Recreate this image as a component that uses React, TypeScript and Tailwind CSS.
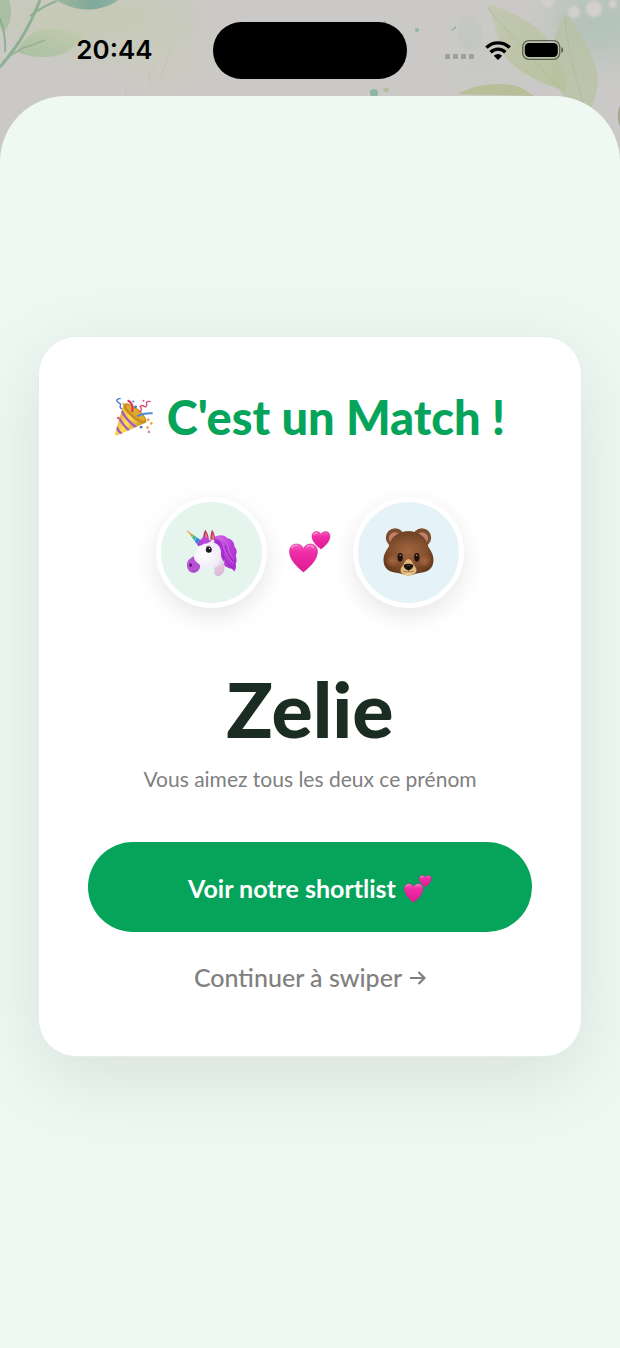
type IconProps = { className?: string };

function Wallpaper() {
  return (
    <svg
      viewBox="0 0 620 190"
      preserveAspectRatio="xMidYMin slice"
      className="absolute inset-x-0 top-0 h-[190px] w-full"
      aria-hidden="true"
    >
      <defs>
        <filter id="wash" x="-50%" y="-50%" width="200%" height="200%">
          <feGaussianBlur stdDeviation="18" />
        </filter>
        <filter id="soft" x="-20%" y="-20%" width="140%" height="140%">
          <feGaussianBlur stdDeviation="1.2" />
        </filter>
        <linearGradient id="leafTeal" x1="0" y1="0" x2="1" y2="0">
          <stop offset="0" stopColor="#9fb89e" />
          <stop offset="0.6" stopColor="#7fa898" />
          <stop offset="1" stopColor="#8db3a4" />
        </linearGradient>
        <linearGradient id="leafSoft" x1="0" y1="1" x2="1" y2="0">
          <stop offset="0" stopColor="#a9c0a2" />
          <stop offset="1" stopColor="#c4cbad" />
        </linearGradient>
        <linearGradient id="leafLime" x1="0" y1="0" x2="1" y2="1">
          <stop offset="0" stopColor="#c3c7b2" />
          <stop offset="1" stopColor="#b8c29e" />
        </linearGradient>
      </defs>
      <rect width="620" height="190" fill="#cbc9c7" />
      <g filter="url(#wash)">
        <ellipse cx="100" cy="20" rx="100" ry="34" fill="#c6c9b6" />
        <ellipse cx="160" cy="60" rx="45" ry="30" fill="#cacabf" />
        <ellipse cx="600" cy="22" rx="50" ry="38" fill="#b3c3b9" />
        <ellipse cx="480" cy="60" rx="40" ry="34" fill="#c8c9c4" />
      </g>

      <path d="M0 0h9c4 11 2 22-4 31L0 27z" fill="#a9bfa3" />
      <path d="M0 67C18 46 29 28 40 0" fill="none" stroke="#8db094" strokeWidth="3" />
      <path d="M30 16C38 10 47 4 57 1M5 52C6 38 3 28 0 18" fill="none" stroke="#8db094" strokeWidth="2" />
      <path d="M56 0C68 8 84 11 96 9c10-2 18-5 22-9z" fill="url(#leafTeal)" />
      <path d="M17 52c5-13 15-21 29-23 13-1 26 3 39 4-6 11-15 20-30 23-14 2-26 1-38-4z" fill="url(#leafSoft)" />
      <path d="M2 62c8-7 13-10 21-14 9-3 15-5 22-8" fill="none" stroke="#95b294" strokeWidth="1.5" />

      <path
        d="M170 50c-1 10-6 14-9 27M155 62l-3 6M148 71l3 15M190 24l-2 4M125 90l1 5"
        fill="none"
        stroke="#bcc29b"
        strokeWidth="1"
        opacity="0.7"
      />

      <ellipse cx="470" cy="33" rx="12" ry="18" fill="#bfc6bb" opacity="0.4" />
      <path d="M486 4c17 4 44 15 56 29 13 14 22 37 25 58-21-5-50-18-62-35-8-13-8-34-19-52z" fill="url(#leafLime)" />
      <path d="M565 13c14 16 32 45 33 67-1 14-4 26-16 44-13-16-28-40-30-60-2-18 5-35 13-51z" fill="#b7c1a1" opacity="0.75" />
      <path d="M488 8c23 28 49 55 76 84M565 17c2 31 10 56 19 91" fill="none" stroke="#a9b690" strokeWidth="1" opacity="0.6" />
      <path d="M458 94c17-10 42-13 62-7l14 9z" fill="#b8bf98" />
      <path d="M620 105c-3 8-3 14 0 22z" fill="#a6a792" />
      <g fill="#d3cfcc" filter="url(#soft)">
        <circle cx="594" cy="9" r="8" />
        <circle cx="574" cy="12" r="6" />
        <circle cx="548" cy="2" r="6" />
        <circle cx="613" cy="4" r="4" />
      </g>
      <g fill="#8eb5a4">
        <circle cx="374" cy="93" r="4" />
        <circle cx="417" cy="30" r="2" />
        <path d="M451 30l5-4v2l-4 3z" />
        <circle cx="385" cy="22" r="1" />
      </g>
      <ellipse cx="386" cy="90" rx="3" ry="2" fill="#b5bd9c" />
    </svg>
  );
}

function WifiIcon({ className }: IconProps) {
  return (
    <svg viewBox="0 0 26 19" className={className} aria-hidden="true">
      <g fill="none" stroke="#000" strokeWidth="3.4">
        <path d="M1.4 6.6a16.6 16.6 0 0 1 23.2 0" />
        <path d="M5.6 11.2a10.5 10.5 0 0 1 14.8 0" />
      </g>
      <path d="M13 19l-4.2-4.200a6 6 0 0 1 8.400 0z" />
    </svg>
  );
}

function BatteryIcon({ className }: IconProps) {
  return (
    <svg viewBox="0 0 42 20" className={className} aria-hidden="true">
      <rect x="0.7" y="0.7" width="37" height="18.6" rx="6" fill="none" stroke="#000" strokeOpacity="0.5" strokeWidth="1.3" />
      <rect x="2.8" y="3" width="33" height="14" rx="4.2" />
      <path d="M39.3 7a3.3 3.3 0 0 1 0 6z" opacity="0.55" />
    </svg>
  );
}

function ArrowIcon({ className }: IconProps) {
  return (
    <svg viewBox="0 0 16 16" className={className} fill="none" stroke="currentColor" strokeWidth="2.2" aria-hidden="true">
      <path d="M0 8h14M8.500 2l6 6-6 6" />
    </svg>
  );
}

function TwoHearts({ className }: IconProps) {
  return (
    <svg viewBox="0 0 42 42" className={className} role="img" aria-label="Deux cœurs">
      <defs>
        <linearGradient id="pink" x1="0" y1="0" x2="0" y2="1">
          <stop offset="0" stopColor="#f65fbd" />
          <stop offset="0.3" stopColor="#ef2ba6" />
          <stop offset="1" stopColor="#df1a95" />
        </linearGradient>
      </defs>
      <path
        d="M14.5 41C10 37.500.5 29.500.5 20.500.5 16 3.500 13 7.500 13c3.200 0 5.700 1.600 7 4.400C15.800 14.600 18.300 13 21.500 13c4 0 7 3 7 7.500 0 9-9.500 17-14 20.500z"
        fill="url(#pink)"
        stroke="#cf1588"
        strokeWidth="0.5"
      />
      <path
        d="M32 18C29 15.800 23 10.800 23 5.200 23 2.400 24.900.6 27.500.6c2 0 3.600 1 4.500 2.800C32.900 1.600 34.500.6 36.500.6 39.100.6 41 2.400 41 5.200 41 10.800 35 15.800 32 18z"
        fill="url(#pink)"
        stroke="#cf1588"
        strokeWidth="0.5"
      />
      <path d="M3 17c1-2 3-3 5-2.600M18 15.600c2-1.200 5-1 6.500.8M25 3.500c.6-1 1.700-1.500 3-1.300" fill="none" stroke="#fba3dc" strokeWidth="1.1" strokeLinecap="round" />
    </svg>
  );
}

function PartyPopper({ className }: IconProps) {
  return (
    <svg viewBox="42 53 112 112" className={className} role="img" aria-label="Fête">
      <defs>
        <linearGradient id="cone" x1="0" y1="0.2" x2="1" y2="0.8">
          <stop offset="0" stopColor="#d99a1e" />
          <stop offset="0.45" stopColor="#ffdf55" />
          <stop offset="1" stopColor="#b87915" />
        </linearGradient>
        <clipPath id="coneClip">
          <path d="M68 70l65 55L47 164c-4-1-6-4-4-9z" />
        </clipPath>
      </defs>
      <path d="M68 70l65 55L47 164c-4-1-6-4-4-9z" fill="url(#cone)" />
      <g clipPath="url(#coneClip)" stroke="#a45bc4" strokeWidth="7" fill="none">
        <path d="M61 91c10 18 24 35 44 49" />
        <path d="M54 112c8 14 17 27 32 39" />
        <path d="M46 138c4 9 9 18 20 25" />
      </g>
      <ellipse cx="101" cy="98" rx="42" ry="15" transform="rotate(40 101 98)" fill="#c98a1c" />
      <ellipse cx="103" cy="97" rx="35" ry="10" transform="rotate(40 103 97)" fill="#e0aa30" />
      <path d="M92 94c4-12 2-27-13-34" fill="none" stroke="#dc2f58" strokeWidth="6" />
      <path d="M107 107c15-8 30-10 46-9" fill="none" stroke="#4b8bd8" strokeWidth="6" />
      <path d="M59 55c-11-1-15 5-9 10s10 3 8 11c-2 6 0 8 5 8" fill="none" stroke="#3d78cf" strokeWidth="4" />
      <path d="M113 94c8-3 8-8 5-13-2-5 4-8 9-4 7 4 10 0 8-7-2-6 4-9 12-6" fill="none" stroke="#df4974" strokeWidth="4" />
      <g fill="#3f7bd2">
        <circle cx="96" cy="63" r="3" />
        <circle cx="103" cy="79" r="4" />
        <circle cx="119" cy="139" r="4" />
      </g>
      <g fill="#e14a72">
        <circle cx="52" cy="112" r="4" />
        <circle cx="117" cy="79" r="3" />
        <circle cx="126" cy="61" r="3" />
      </g>
      <g fill="#f0a53c">
        <circle cx="66" cy="70" r="3" />
        <circle cx="140" cy="117" r="4" />
        <circle cx="149" cy="128" r="4" />
        <circle cx="138" cy="140" r="4" />
      </g>
      <circle cx="142" cy="153" r="4" fill="#d684cf" />
    </svg>
  );
}

function Unicorn({ className }: IconProps) {
  return (
    <svg viewBox="126 128 154 146" className={className} role="img" aria-label="Licorne">
      <defs>
        <linearGradient id="horn" x1="128" y1="134" x2="174" y2="176" gradientUnits="userSpaceOnUse">
          <stop offset="0" stopColor="#e0685c" />
          <stop offset="0.22" stopColor="#f0a53a" />
          <stop offset="0.42" stopColor="#5fc257" />
          <stop offset="0.62" stopColor="#28a6d5" />
          <stop offset="0.82" stopColor="#4a52cf" />
          <stop offset="1" stopColor="#9d41c8" />
        </linearGradient>
        <radialGradient id="coat" cx="0.45" cy="0.4" r="0.65">
          <stop offset="0" stopColor="#ffffff" />
          <stop offset="0.65" stopColor="#f0ebf7" />
          <stop offset="1" stopColor="#cdbfe0" />
        </radialGradient>
        <linearGradient id="mane" x1="0" y1="0" x2="1" y2="1">
          <stop offset="0" stopColor="#cf68e6" />
          <stop offset="0.5" stopColor="#bb3fdb" />
          <stop offset="1" stopColor="#a42bc9" />
        </linearGradient>
      </defs>
      <path
        d="M208 156c10-8 34-12 43 2 14 2 22 14 21 25 8 8 9 19 4 27 3 9 4 17 0 25 2 9 1 17-5 23-2-5-6-8-11-9-14-3-22-10-26-23z"
        fill="url(#mane)"
      />
      <path d="M178 163c-1-13 2-24 6-31 7 8 11 19 11 31zM200 166c-1-14 1-27 5-34 7 10 11 23 8 38z" fill="#b93b64" />
      <path d="M184 162c-1-9 0-17 2-22 4 7 5 14 5 22zM205 165c0-10 0-18 2-23 4 7 4 16 3 24z" fill="#e87a8f" />
      <path
        d="M165 180c8-15 26-22 43-17 20 4 31 20 33 39 1 16 0 30 1 45 0 13-6 22-15 24-12 3-17-5-16-16 0-6-2-9-8-11-16 5-29 7-37 13-10 9-29 7-35-8-4-11-2-23 8-30 12-9 20-23 26-39z"
        fill="url(#coat)"
      />
      <path d="M212 247c9-1 20-7 27-14 4 13 4 28-5 35-13 7-24-1-22-12z" fill="#e5bfd3" opacity="0.7" />
      <path d="M131 249c-4-11-2-23 8-30 4-3 8-5 10-8 1 13 8 20 18 26 3 5 2 11-3 17-11 13-28 9-33-5z" fill="#b653d3" />
      <ellipse cx="140" cy="239" rx="4" ry="5.500" fill="#56117d" />
      <path d="M146 258c5 1 11-1 16-6" fill="none" stroke="#7e2ba5" strokeWidth="2" />
      <path d="M127 133l48 33c-1 8-5 13-11 16z" fill="url(#horn)" />
      <path d="M139 142l-4 5M148 148l-6 9M158 155l-7 12M167 161l-7 15" stroke="#ffffff" strokeOpacity="0.6" strokeWidth="2" />
      <path d="M164 180c2-12 8-21 16-29 6 6 15 10 23 14-8 8-15 10-22 9-6 5-11 7-17 6z" fill="#bc45da" />
      <path d="M215 160c16 4 24 13 25 29 1 13 5 25 1 39-9-8-10-19-9-30-2-12-8-22-22-27 2-4 3-7 5-11z" fill="#a92ecf" />
      <path d="M222 154c19 6 31 17 32 33 0 13 8 23 16 33M230 161c8 12 6 24 13 34 8 11 12 27 26 40" fill="none" stroke="#d678ea" strokeWidth="2" />
      <path d="M243 180c8 17 9 33 25 46M238 208c6 19 16 30 30 39" fill="none" stroke="#8120aa" strokeWidth="2" />
      <circle cx="195" cy="193" r="9" fill="#1e1a1f" />
      <circle cx="197" cy="189" r="2" fill="#ffffff" />
      <path d="M186 186c4-4 9-5 14-3" fill="none" stroke="#332538" strokeWidth="2" />
    </svg>
  );
}

function Bear({ className }: IconProps) {
  return (
    <svg viewBox="112 134 152 144" className={className} role="img" aria-label="Ours">
      <defs>
        <radialGradient id="fur" cx="0.5" cy="0.45" r="0.6">
          <stop offset="0" stopColor="#a0673f" />
          <stop offset="0.55" stopColor="#865130" />
          <stop offset="1" stopColor="#603619" />
        </radialGradient>
        <radialGradient id="cheek">
          <stop offset="0" stopColor="#a5673f" />
          <stop offset="1" stopColor="#a5673f" stopOpacity="0" />
        </radialGradient>
        <linearGradient id="brow" x1="0" y1="0" x2="0" y2="1">
          <stop offset="0" stopColor="#6d4223" />
          <stop offset="1" stopColor="#6d4223" stopOpacity="0" />
        </linearGradient>
      </defs>
      <circle cx="148" cy="163" r="28" fill="#7d4c2c" />
      <circle cx="228" cy="163" r="28" fill="#7d4c2c" />
      <circle cx="147" cy="165" r="18" fill="#bd8068" />
      <circle cx="229" cy="165" r="18" fill="#bd8068" />
      <path
        d="M188 144c28 0 51 15 58 42 3 11 17 22 17 44 0 23-15 37-38 38-12 0-22 8-37 8s-25-8-37-8c-23-1-38-15-38-38 0-22 14-33 17-44 7-27 30-42 58-42z"
        fill="url(#fur)"
      />
      <path d="M188 144c28 0 51 15 58 42H130c7-27 30-42 58-42z" fill="url(#brow)" opacity="0.7" />
      <ellipse cx="140" cy="233" rx="22" ry="20" fill="url(#cheek)" />
      <ellipse cx="236" cy="233" rx="22" ry="20" fill="url(#cheek)" />
      <path d="M188 228c8 0 10 7 14 14 5 8 10 12 10 19 0 10-12 16-24 16s-24-6-24-16c0-7 5-11 10-19 4-7 6-14 14-14z" fill="#dfb67b" />
      <ellipse cx="188" cy="270" rx="11" ry="6" fill="#edcb93" />
      <path d="M188 257v8M175 264c5 3 9 3 13 0 4 3 8 3 13 0" fill="none" stroke="#754824" strokeWidth="2" strokeLinecap="round" />
      <path d="M174 246c2-6 25-6 28 0 2 5-7 15-14 15s-16-10-14-15z" fill="#19130f" />
      <ellipse cx="188" cy="246" rx="7" ry="2" fill="#4a403a" />
      <ellipse cx="163" cy="222" rx="8" ry="13" fill="#20130c" />
      <ellipse cx="213" cy="222" rx="8" ry="13" fill="#20130c" />
      <circle cx="163" cy="216" r="2" fill="#e7dfdc" />
      <circle cx="213" cy="216" r="2" fill="#e7dfdc" />
    </svg>
  );
}

function StatusBar() {
  return (
    <header className="relative grid h-24 grid-cols-[1fr_194px_1fr] items-center pt-1">
      <time className="pl-4 text-center font-['Inter'] text-[26px] leading-8 font-semibold text-black">20:44</time>
      <div className="h-[57px] rounded-full bg-black" />
      <div className="flex items-center justify-center gap-[11px] pr-[18px]">
        <div className="flex gap-[3px] pt-3">
          {[0, 1, 2, 3].map((dot) => (
            <span key={dot} className="size-[5px] rounded-[1px] bg-[#a09e9c]" />
          ))}
        </div>
        <WifiIcon className="h-[19px] w-[26px]" />
        <BatteryIcon className="h-5 w-[42px]" />
      </div>
    </header>
  );
}

export default function App() {
  return (
    <div className="relative flex min-h-screen flex-col overflow-hidden bg-[#cbc9c7] font-['Lato',sans-serif]">
      <Wallpaper />
      <StatusBar />

      <main className="relative flex flex-1 flex-col justify-center rounded-t-[66px] bg-[#eff9f4] px-[38px] pb-[52px]">
        <section className="flex flex-col items-center rounded-[38px] border border-[#e3f0ea] bg-white px-[49px] py-12 text-center shadow-[0_20px_80px_rgba(0,0,0,0.1)]">
          <h1 className="flex items-center gap-[14px] text-[47px] leading-[64px] font-black whitespace-nowrap text-[#05a45a]">
            <PartyPopper className="size-[38px]" />
            C'est un Match !
          </h1>

          <div className="mt-12 flex items-center gap-[22px]">
            <div className="flex size-[111px] items-center justify-center rounded-full border-[5px] border-white bg-[#e6f4ee] shadow-[0_8px_24px_rgba(0,0,0,0.1)]">
              <Unicorn className="h-[49px] w-[51px]" />
            </div>
            <TwoHearts className="size-[42px]" />
            <div className="flex size-[111px] items-center justify-center rounded-full border-[5px] border-white bg-[#e5f3f8] shadow-[0_8px_24px_rgba(0,0,0,0.1)]">
              <Bear className="h-12 w-[51px]" />
            </div>
          </div>

          <h2 className="mt-12 text-[77px] leading-[104px] font-black text-[#1b2d22]">Zelie</h2>
          <p className="mt-1 text-[21px] leading-[30px] text-[#808080]">Vous aimez tous les deux ce prénom</p>

          <button
            type="button"
            className="mt-12 flex h-[90px] w-full items-center justify-center gap-2 rounded-full bg-[#05a45a] pt-1 text-[25px] font-bold text-white"
          >
            Voir notre shortlist
            <TwoHearts className="size-7" />
          </button>
          <button type="button" className="mt-4 flex h-[60px] items-center gap-2 text-[25px] font-medium text-[#808080]">
            Continuer à swiper
            <ArrowIcon className="size-4" />
          </button>
        </section>
      </main>
    </div>
  );
}
